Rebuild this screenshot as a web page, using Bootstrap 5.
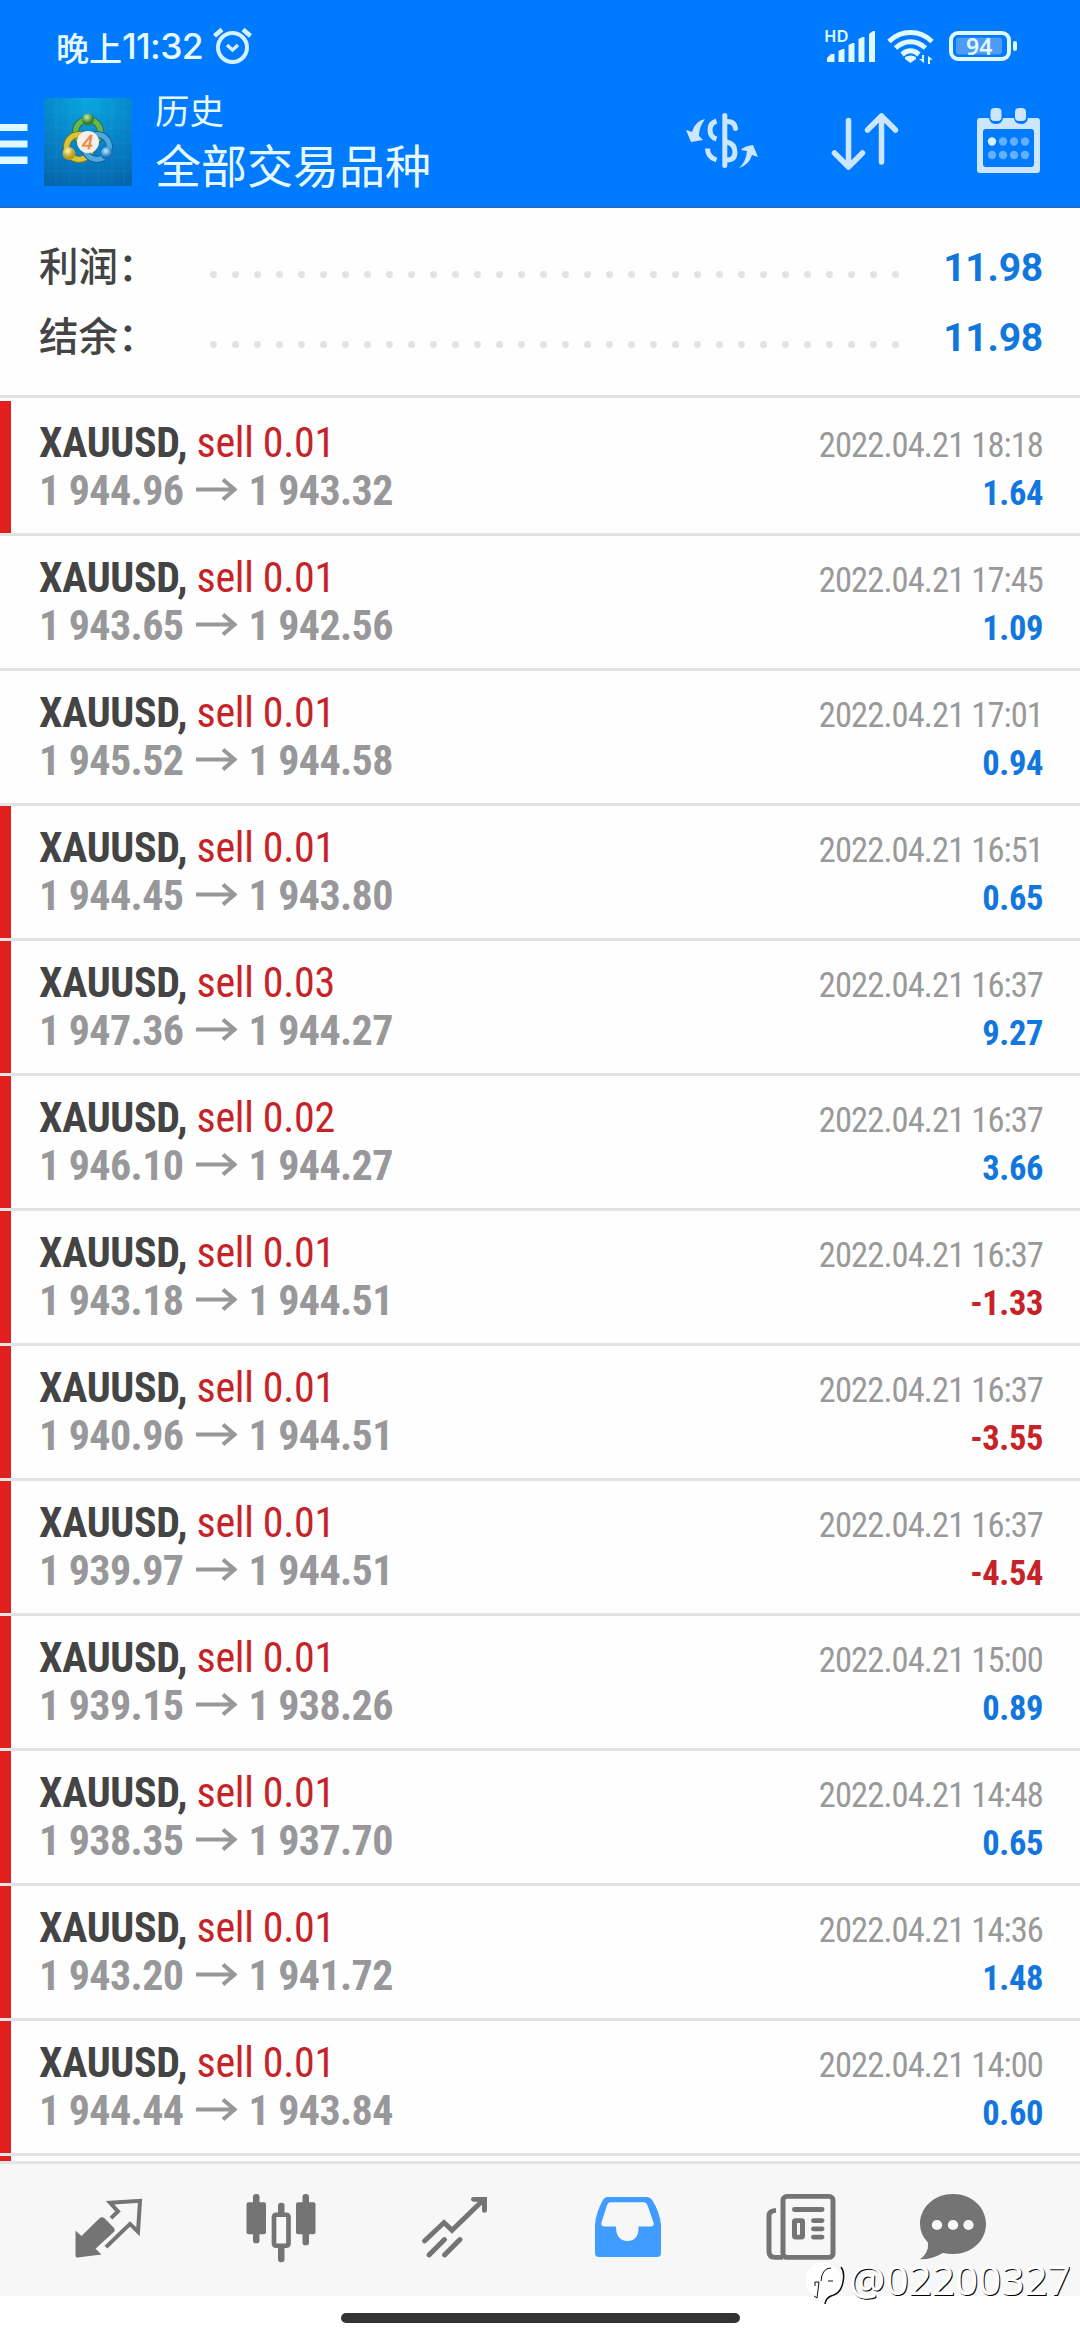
<!DOCTYPE html>
<html lang="zh-CN">
<head>
<meta charset="utf-8">
<meta name="viewport" content="width=device-width, initial-scale=1">
<title>历史</title>
<link href="https://cdn.jsdelivr.net/npm/bootstrap@5.3.0/dist/css/bootstrap.min.css" rel="stylesheet">
<style>
body{font-family:Roboto,"Noto Sans CJK SC",sans-serif;color:#444;height:2340px;overflow:hidden;background:#fefefe}
svg{display:block;flex:none}
.topbar{background:#007aff;height:208px;border-bottom:2px solid #1a6ecb;color:#e6f9ff}
.status{height:90px;padding:0 62px 0 56px}
.clock{font:500 33px/40px "Noto Sans CJK SC",sans-serif;white-space:nowrap;padding-top:3px}
.clock b{font:500 35.5px/40px Inter,sans-serif;letter-spacing:-.7px}
.toolbar{height:116px;padding-right:40px}
.ttl{font-family:"Noto Sans CJK SC",sans-serif;margin-left:23px;font-weight:400}
.ttl-a{font-size:34.5px;line-height:38px}
.ttl-b{font-size:46px;line-height:70px}
.summary{height:190px;border-bottom:3px solid #e3e3e3;padding:24px 37px 0 39px}
.sumline{height:70px}
.sumline .lbl{font:500 39.5px/64px "Noto Sans CJK SC",sans-serif;height:70px;width:171px}
.sumline .dots{margin-top:5px}
.sumline .val{font-size:39px;font-weight:700;line-height:72px;color:#1277dd;height:70px;letter-spacing:-.2px}
.list{height:1763px;overflow:hidden;padding-top:3px}
.deal{font-family:"Roboto Condensed",Roboto,sans-serif;font-stretch:75%;height:135px;border-bottom:3px solid #e3e3e3;position:relative;padding:18px 37px 0 39px}
.deal.tagged::before{content:"";position:absolute;left:0;top:0;bottom:0;width:11px;background:#e01f1f}
.ln{height:48px;line-height:48px;white-space:nowrap}
.fit{font-size:42px;letter-spacing:-.3px}
.sell{color:#c62328;font-weight:400}
.px{color:#98989a;font-weight:700;letter-spacing:-.6px}
.px svg{display:inline-block;margin:0 10px 0 13px;vertical-align:4px}
.dt{color:#999;font-size:34.5px;letter-spacing:-.9px}
.gain{font-size:34.5px;font-weight:700;letter-spacing:-.4px}
.pos{color:#1277dd}.neg{color:#c62328}
.tabs{background:#f7f7f7;border-top:3px solid #e3e3e3;height:135px}
.home-zone{height:44px;padding-top:17px;background:#fff}
.pill{width:399px;height:10px;border-radius:5px;background:#333}
.wm{position:absolute;left:806px;top:2255px;color:#fff;font:400 40.5px/50px "Noto Sans",sans-serif;text-shadow:1px 1px 0 #000;white-space:nowrap}
</style>
</head>
<body>
<header class="topbar">
  <div class="status d-flex align-items-center justify-content-between">
    <div class="clock d-flex align-items-center"><span>晚上</span><b>11:32</b>
      <svg class="ms-2" width="42" height="42" viewBox="210 27 42 42" fill="none" stroke="#d5f0ff"><circle cx="231.500" cy="48.500" r="14.500" stroke-width="4"/><path d="M226 46l5.500 5 5.500-5" stroke-width="3.400"/><path d="M213.500 37l7.500-6.500M249.500 37l-7.500-6.500" stroke-width="4.500"/></svg>
    </div>
    <svg width="196" height="46" viewBox="822 23 196 46" fill="#e0f8ff"><text x="824" y="43" font-family="Noto Sans" font-weight="600" font-size="16.500">HD</text>
      <path d="M827 63v-4l4-4h3.500v8zM838.500 63V52l4-2h2v13zM848.500 63V46l4-2h2v19zM858.500 63V40l4-2h2v25zM869 63V35l4-3h2v31z"/>
      <g fill="none" stroke="#e0f8ff" stroke-width="5"><path d="M889 42.500c12-12 31-12 43 0M895.500 49c9-8.500 21-8.500 30 0M902 55.500c6-5 11-5 17 0"/></g><path d="M905 58q6-3 11 0v2l-5.500 4-5.500-4z"/><path d="M924 56v8l-5-4h3v-4zM928 65v-8l5 3.500h-3V65z"/>
      <rect x="951" y="34" width="58" height="26" rx="7" fill="none" stroke="#e0f8ff" stroke-width="4"/><rect x="956" y="38.500" width="46" height="17" rx="3" fill="#4c9bf5"/><rect x="1013" y="42" width="4" height="10" rx="2"/><text x="966" y="55.500" font-family="Noto Sans" font-weight="600" font-size="23">94</text></svg>
  </div>
  <div class="toolbar d-flex align-items-start justify-content-between">
    <div class="d-flex align-items-start">
      <svg width="44" height="96" viewBox="0 90 44 96" fill="#e0f8ff"><path d="M0 124h27.500v7H0zM0 140.500h27.500v7H0zM0 156.500h27.500v7.500H0z"/></svg>
      <svg width="88" height="96" viewBox="44 90 88 96">
        <defs><radialGradient id="bg" cx=".5" cy="0" r="1.100"><stop offset="0" stop-color="#08a8e0"/><stop offset=".5" stop-color="#0784c9"/><stop offset="1" stop-color="#0563ab"/></radialGradient>
        <radialGradient id="gg" cx=".4" cy=".3"><stop offset="0" stop-color="#c6efb0"/><stop offset="1" stop-color="#38802b"/></radialGradient>
        <radialGradient id="yy" cx=".4" cy=".3"><stop offset="0" stop-color="#fff6b4"/><stop offset="1" stop-color="#b89b1a"/></radialGradient>
        <radialGradient id="bb" cx=".4" cy=".3"><stop offset="0" stop-color="#c0ecff"/><stop offset="1" stop-color="#1672b8"/></radialGradient></defs>
        <rect x="44" y="98" width="88" height="88" fill="url(#bg)"/><path d="M56 98v88M70 98v88M84 98v88M98 98v88M112 98v88M124 98v88M44 112h88M44 128h88M44 143h88M44 157h88M44 171h88" stroke="#fff" stroke-opacity=".06"/>
        <g fill="none"><circle cx="88" cy="132" r="12.500" stroke="#2d7532" stroke-width="7"/><circle cx="88" cy="132" r="12.500" stroke="#66b84e" stroke-width="5"/><circle cx="79" cy="147" r="12.500" stroke="#857520" stroke-width="7"/><circle cx="79" cy="147" r="12.500" stroke="#d6c43c" stroke-width="5"/><circle cx="97" cy="147" r="12.500" stroke="#1b5f99" stroke-width="7"/><circle cx="97" cy="147" r="12.500" stroke="#4ca8df" stroke-width="5"/></g>
        <circle cx="88" cy="119.500" r="6" fill="url(#gg)"/><circle cx="69" cy="153.500" r="6.500" fill="url(#yy)"/><circle cx="107" cy="153.500" r="6.500" fill="url(#bb)"/><circle cx="88" cy="142" r="11" fill="#f5f0ef"/><text x="82" y="149" font-family="Liberation Sans" font-size="20" font-style="italic" fill="#ee8a3c" stroke="#ee8a3c" stroke-width=".5">4</text></svg>
      <div class="ttl"><div class="ttl-a">历史</div><div class="ttl-b">全部交易品种</div></div>
    </div>
    <svg width="356" height="90" viewBox="684 90 356 90" fill="#cce6ff" stroke-linecap="round" stroke-linejoin="round">
      <g fill="none" stroke="#cce6ff" stroke-width="5"><path d="M724.800 115.500V165.500"/><path stroke-linecap="butt" d="M716.500 121q-6.500 2-6.500 9t6.500 9M716.500 160q-9-3-9-11.500"/><path d="M727 121.500q8 0 8.500 7M727 142q8 2 8 10t-8 8"/></g>
      <path d="M705 119q-10 2-13 13l-6-2 5 12 12-2-4-4q0-9 6-17zM739 168q7-6 8-17l-6-1q3-4 12-5l5 12-6-2q-3 10-13 13z"/>
      <g fill="none" stroke="#cce6ff" stroke-width="5.500"><path d="M848.500 120.500v46M834.500 153l14 14 14-14M881.500 162v-46M867.500 130l14-14 14 14"/></g>
      <path fill-rule="evenodd" d="M980 118h9q1 6 7 6t7-6h11q1 6 7 6t7-6h9q3 0 3 3v49q0 3-3 3h-57q-3 0-3-3v-49q0-3 3-3zm6 11q-3 0-3 3v32q0 3 3 3h45q3 0 3-3v-32q0-3-3-3z"/><rect x="990.500" y="108" width="11" height="13" rx="4"/><rect x="1015" y="108" width="11" height="13" rx="4"/>
      <circle cx="992" cy="141.500" r="4.200" fill="#d5efff"/><g fill="#62b0ff"><circle cx="1003" cy="141.500" r="4.200"/><circle cx="1014" cy="141.500" r="4.200"/><circle cx="1025" cy="141.500" r="4.200"/><circle cx="992" cy="155" r="4.200"/><circle cx="1003" cy="155" r="4.200"/><circle cx="1014" cy="155" r="4.200"/><circle cx="1025" cy="155" r="4.200"/></g></svg>
  </div>
</header>
<section class="summary">
  <div class="sumline d-flex align-items-center"><span class="lbl">利润：</span><svg class="dots" width="700" height="16"><path d="M3.500 12.500H695" stroke="#e3e3e3" stroke-width="7" stroke-linecap="round" stroke-dasharray="0 22"/></svg><span class="val ms-auto">11.98</span></div>
  <div class="sumline d-flex align-items-center"><span class="lbl">结余：</span><svg class="dots" width="700" height="16"><path d="M3.500 12.500H695" stroke="#e3e3e3" stroke-width="7" stroke-linecap="round" stroke-dasharray="0 22"/></svg><span class="val ms-auto">11.98</span></div>
</section>
<main class="list" id="deals"></main>
<nav class="tabs">
  <svg width="1080" height="132" viewBox="0 2165 1080 136.400" preserveAspectRatio="none" fill="#747474">
    <path d="M75.500 2234l6 5.500 17.500-18q3-3 6 0l8.500 9q2.500 2.500 0 5l-18 17 6 6-24 3q-2 .5-2-2z" stroke="none"/>
    <path d="M111 2221l7-7-8-9 30-2-2 32-8-8-24 24" fill="none" stroke="#747474" stroke-width="4"/>
    <g><rect x="246.500" y="2204.500" width="19.500" height="33" rx="2"/><rect x="253" y="2196" width="6.500" height="51" rx="3"/><rect x="296" y="2204.500" width="19.500" height="33" rx="2"/><rect x="302.500" y="2196" width="6.500" height="53" rx="3"/><rect x="278" y="2205" width="6.500" height="14" rx="3"/><rect x="278" y="2247" width="6.500" height="19.500" rx="3"/><rect x="274" y="2217.500" width="14.500" height="32" rx="2" fill="#f7f7f7" stroke="#747474" stroke-width="4.700"/></g>
    <g fill="none" stroke="#747474" stroke-width="5" stroke-linecap="round"><path d="M424.500 2244.500l19.500-19 8 8 31-31M473.500 2201.500H484.500V2213M429 2259l15.500-16M444.500 2259l15.500-16"/></g>
    <path fill="#409cff" fill-rule="evenodd" d="M607 2199h40q3 0 5 3 8 13 9 26v29q0 4-4 4h-58q-4 0-4-4v-29q1-13 8-26 2-3 4-3zm4 5.500q-3 0-4 3l-5.500 18q-1 4 3 4H616q0 15 11.500 15t11-15h12q4 0 3-4l-6-18q-1-3-4-3z"/>
    <g fill="none" stroke="#747474" stroke-width="5"><rect x="783" y="2198.500" width="50" height="63" rx="4"/><path d="M783 2261.500h-8q-6 0-6-6v-37q0-5 7-5.500"/><path stroke-linecap="round" d="M794.500 2212h27.500M813.500 2223.500h8.500M813.500 2232h8.500M813.500 2240.500h8.500"/><rect x="794.500" y="2223.500" width="8" height="17" rx="1"/></g>
    <path d="M953 2196c18.500 0 33 13.500 33 31s-14.500 31-33 31q-5 0-10-1-12 7-23 6.500 9-6.500 8-17-8-9-8-19.500c0-17.500 14.500-31 33-31z"/><g fill="#f7f7f7"><circle cx="937" cy="2228" r="5.200"/><circle cx="953" cy="2228" r="5.200"/><circle cx="968.500" cy="2228" r="5.200"/></g>
  </svg>
</nav>
<div class="home-zone d-flex justify-content-center"><div class="pill"></div></div>
<div class="wm d-flex align-items-center"><svg width="43" height="50" viewBox="806 2260 43 50"><circle cx="823" cy="2285" r="17.500" fill="#fff"/><path d="M815 2291v-4h4l-2 16-3-2M821 2286q1-13 10-13M828 2286h5" fill="none" stroke="#111" stroke-width="1"/><path d="M841 2272q4 5 2 15-2 12-12 14-5 2-6 8" fill="none" stroke="#111" stroke-width="1.500"/></svg><span>@02200327</span></div>
<script src="https://cdn.jsdelivr.net/npm/bootstrap@5.3.0/dist/js/bootstrap.bundle.min.js"></script>
<script>
const deals=[
[1,"0.01","1 944.96","1 943.32","18:18","1.64"],
[0,"0.01","1 943.65","1 942.56","17:45","1.09"],
[0,"0.01","1 945.52","1 944.58","17:01","0.94"],
[1,"0.01","1 944.45","1 943.80","16:51","0.65"],
[1,"0.03","1 947.36","1 944.27","16:37","9.27"],
[1,"0.02","1 946.10","1 944.27","16:37","3.66"],
[1,"0.01","1 943.18","1 944.51","16:37","-1.33"],
[1,"0.01","1 940.96","1 944.51","16:37","-3.55"],
[1,"0.01","1 939.97","1 944.51","16:37","-4.54"],
[1,"0.01","1 939.15","1 938.26","15:00","0.89"],
[1,"0.01","1 938.35","1 937.70","14:48","0.65"],
[1,"0.01","1 943.20","1 941.72","14:36","1.48"],
[1,"0.01","1 944.44","1 943.84","14:00","0.60"]];
const arrow='<svg width="42" height="23" viewBox="0 0 42 23" fill="none" stroke="#98989a" stroke-width="4"><path d="M0 11.500h40M27 1.500l11.500 10-11.500 10"/></svg>';
document.getElementById("deals").innerHTML=deals.map(d=>`<div class="deal${d[0]?" tagged":""}">
<div class="ln d-flex justify-content-between align-items-baseline"><span class="fit"><b>XAUUSD,</b> <span class="sell">sell ${d[1]}</span></span><span class="dt">2022.04.21 ${d[4]}</span></div>
<div class="ln d-flex justify-content-between align-items-baseline"><span class="fit px">${d[2]}${arrow}${d[3]}</span><span class="gain ${d[5][0]=="-"?"neg":"pos"}">${d[5]}</span></div></div>`).join("")+'<div class="deal tagged"></div>';
</script>
</body>
</html>
